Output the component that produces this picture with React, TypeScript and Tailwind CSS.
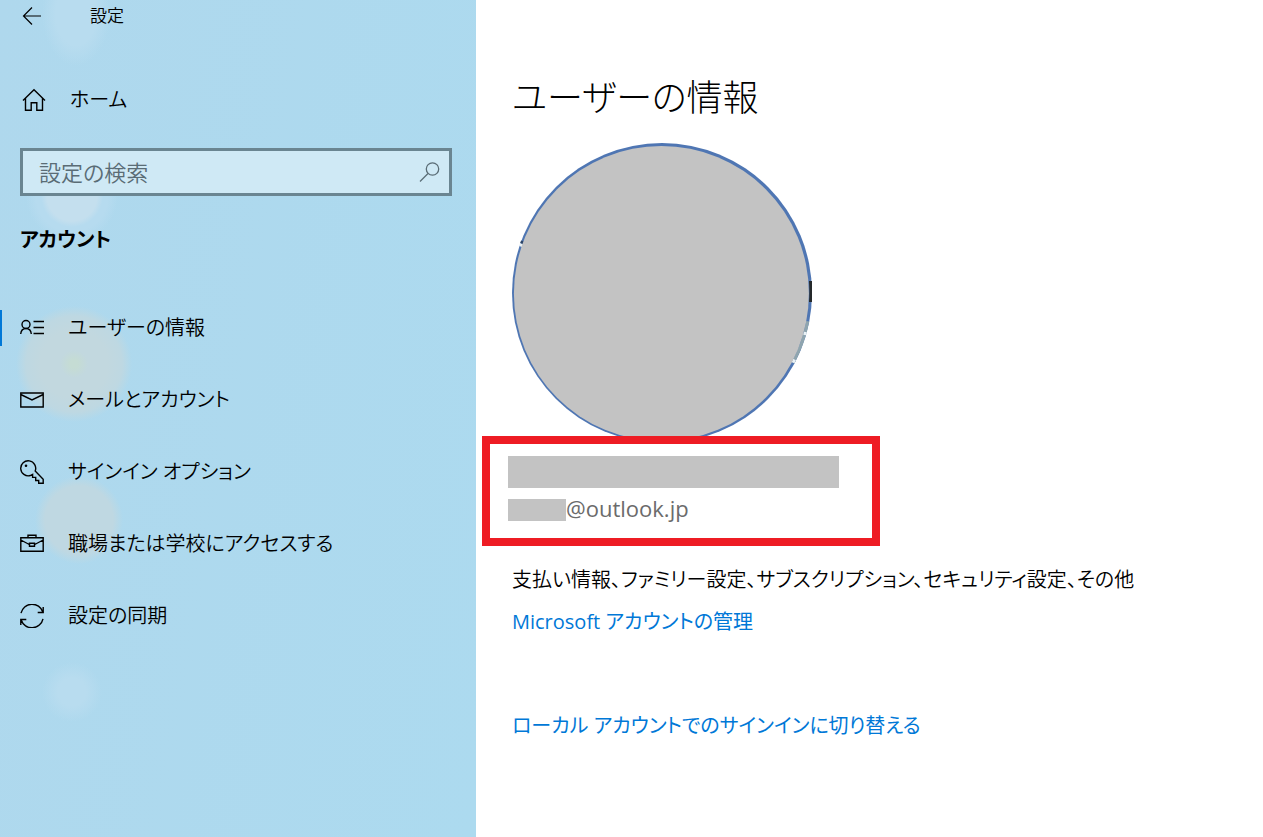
import type { ReactNode } from 'react';

type NavItem = { id: string; label: string; icon: ReactNode; active?: boolean };

const Icon = ({ children }: { children: ReactNode }) => (
  <svg
    viewBox="0 0 24 24"
    className="size-6 shrink-0"
    fill="none"
    stroke="currentColor"
    strokeWidth="1.4"
    aria-hidden="true"
  >
    {children}
  </svg>
);

const navItems: NavItem[] = [
  {
    id: 'info',
    label: 'ユーザーの情報',
    active: true,
    icon: (
      <Icon>
        <circle cx="6" cy="8.500" r="4" />
        <path d="M.7 18C1 14.700 3 12.500 6 12.500s5 2.200 5.300 5.500M13.500 5.500H24M13.500 11.500H24M13.500 17.500H24" />
      </Icon>
    ),
  },
  {
    id: 'mail',
    label: 'メールとアカウント',
    icon: (
      <Icon>
        <path d="M.8 5h22.400v14H.8zM.8 6.500l11.200 5.500 11.200-5.500" />
      </Icon>
    ),
  },
  {
    id: 'signin',
    label: 'サインイン オプション',
    icon: (
      <Icon>
        <path d="M15.200 11l8 8.200v4.100h-4.500v-2.800h-3v-3.100h-3.100v-3.100l-2.300 1.200A7.500 7.500 0 1 1 15.200 11z" />
        <circle cx="6" cy="5.800" r="1.300" fill="currentColor" stroke="none" />
      </Icon>
    ),
  },
  {
    id: 'work',
    label: '職場または学校にアクセスする',
    icon: (
      <Icon>
        <path d="M.8 5.700h22.400v13.500H.8zM8 5.500V3.200h8v2.300M.8 8l8.500 4.500M23.200 8l-8.500 4.500M9.500 11.200h5v3h-5z" />
      </Icon>
    ),
  },
  {
    id: 'sync',
    label: '設定の同期',
    icon: (
      <Icon>
        <path d="M1 9.200A11.300 11.300 0 0 1 22.800 8M23.200 3v5.500h-5.500M23 14.800A11.300 11.300 0 0 1 1.200 16M.8 21v-5.500h5.500" />
      </Icon>
    ),
  },
];

const Sidebar = () => (
  <aside className="w-[476px] shrink-0 bg-[#aed9ee] bg-[radial-gradient(ellipse_34px_52px_at_76px_14px,#b8dcef_60%,transparent),radial-gradient(circle_at_72px_196px,#c4dfee_25px,#b6dbef_31px,#b6dbef_36px,transparent_46px),radial-gradient(circle_at_74px_364px,#c5dcd4_4px,#c2d8df_14px,#c2d8df_34px,#bed8e2_48px,transparent_58px),radial-gradient(circle_at_79px_520px,#bfd8e2_34px,transparent_44px),radial-gradient(circle_at_72px_692px,#b8dcef_14px,transparent_30px),linear-gradient(100deg,#afd8ed,#acdaef)]">
    <header className="flex h-8 items-center gap-12 pl-5">
      <button type="button" aria-label="戻る" className="flex w-[22px] justify-center">
        <Icon>
          <path d="M22 12H4.500M13 3.500 4.500 12l8.500 8.500" strokeWidth="1.200" />
        </Icon>
      </button>
      <h1 className="text-[17px] leading-6">設定</h1>
    </header>

    <a href="#home" className="mt-11 flex h-12 items-center gap-6 pl-[22px]">
      <Icon>
        <path d="M1 12.500 12 1.700l11 10.800M3.500 10.500v11.700h5.700v-7.500h5.600v7.500h5.700V10.500" />
      </Icon>
      ホーム
    </a>

    <div className="mt-6 mr-6 ml-5 flex h-12 items-center border-3 border-[#6a8591] bg-[#cfe9f5] pr-2 pl-4 text-[22px] text-[#5a6c75]">
      <input
        type="text"
        aria-label="設定の検索"
        placeholder="設定の検索"
        className="min-w-0 flex-1 bg-transparent leading-8 outline-none placeholder:text-[#5a6c75] placeholder:opacity-100"
      />
      <Icon>
        <circle cx="15.500" cy="9" r="6.200" strokeWidth="1.300" />
        <path d="M11 13.500 3 21.500" strokeWidth="1.300" />
      </Icon>
    </div>

    <h2 className="mt-7 pl-5 leading-8 font-bold">アカウント</h2>

    <nav className="mt-9" aria-label="アカウント">
      <ul>
        {navItems.map((item) => (
          <li key={item.id} className="flex h-[72px] items-center">
            <span className={item.active ? 'h-9 w-0.5 bg-[#0078d7]' : 'h-9 w-0.5'} />
            <a
              href={`#${item.id}`}
              aria-current={item.active ? 'page' : undefined}
              className="flex items-center gap-6 pl-[18px]"
            >
              {item.icon}
              {item.label}
            </a>
          </li>
        ))}
      </ul>
    </nav>
  </aside>
);

const Avatar = () => (
  <svg viewBox="0 0 300 300" className="size-[300px]" role="img" aria-label="プロフィール画像">
    <circle cx="150" cy="150" r="150" fill="#4f76b3" />
    <g fill="none" strokeWidth="3">
      <path d="M298.500 138A148.500 148.500 0 0 1 298.500 159" stroke="#25292b" />
      <path d="M295.800 178.300A148.500 148.500 0 0 1 281.100 219.700" stroke="#8fa5ae" />
      <path d="M293.400 189 292.800 192M282.500 216.500 281 219.700M9.500 100.500 8.500 103.500" stroke="#e9f1f5" />
      <path d="M10.500 98 9.500 100.500" stroke="#2c4568" />
    </g>
    <circle cx="149.400" cy="150.500" r="147.500" fill="#c3c3c3" />
  </svg>
);

const App = () => (
  <div className="flex min-h-screen bg-white font-['Open_Sans','Noto_Sans_CJK_JP',sans-serif] text-[20px] leading-8 font-[350] text-black [font-feature-settings:'palt']">
    <Sidebar />

    <main className="min-w-0 flex-1 pl-9">
      <h2 className="pt-[66px] text-[36px] leading-16 font-light">ユーザーの情報</h2>

      <div className="mt-[13px]">
        <Avatar />
      </div>

      <section className="relative -mt-[7px] -ml-[30px] w-[398px] border-8 border-[#ee1c24] bg-white pt-3 pb-3.5 pl-[18px]">
        <div className="h-8 w-[331px] bg-[#c3c3c3]" />
        <p className="mt-1 flex items-center text-[22px] font-normal text-[#6b6b6b]">
          <span className="mt-1 h-[22px] w-[58px] bg-[#c3c3c3]" />
          @outlook.jp
        </p>
      </section>

      <p className="mt-[18px]">支払い情報、ファミリー設定、サブスクリプション、セキュリティ設定、その他</p>
      <a href="#manage" className="mt-[10px] block w-fit font-normal text-[#0078d7]">
        Microsoft アカウントの管理
      </a>
      <a href="#local" className="mt-18 block w-fit font-normal text-[#0078d7]">
        ローカル アカウントでのサインインに切り替える
      </a>
    </main>
  </div>
);

export default App;
